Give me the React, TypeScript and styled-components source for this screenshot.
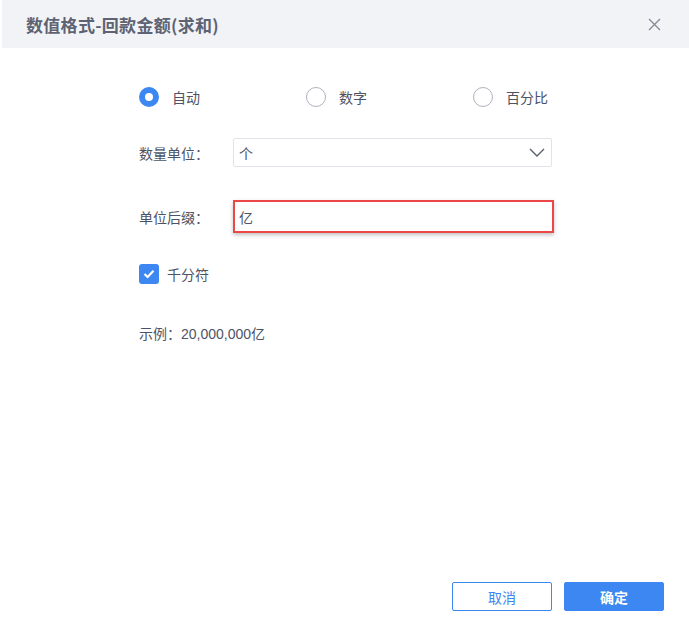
import React from "react";
import styled, { createGlobalStyle } from "styled-components";

const Global = createGlobalStyle`
  html, body { margin: 0; padding: 0; background: #ffffff; }
  body { font-family: "Liberation Sans", "Noto Sans CJK SC", sans-serif; }
  * { box-sizing: border-box; }
`;

const Dialog = styled.div`
  width: 687px;
  height: 624px;
  margin-left: 2px;
  display: flex;
  flex-direction: column;
  background: #ffffff;
`;

const Header = styled.div`
  height: 48px;
  background: #f2f3f7;
  display: flex;
  align-items: center;
  justify-content: space-between;
  padding: 0 24px 0 24px;
`;

const Title = styled.div`
  font-family: "Noto Sans CJK SC", sans-serif;
  font-size: 17px;
  font-weight: 700;
  color: #5d6373;
  letter-spacing: 0.3px;
`;

const CloseBtn = styled.div`
  width: 14px;
  height: 14px;
  display: flex;
  align-items: center;
  justify-content: center;
  margin-right: 4px;
`;

const Body = styled.div`
  flex: 1;
  padding: 38px 0 0 137px;
  display: flex;
  flex-direction: column;
`;

const RadioRow = styled.div`
  display: grid;
  grid-template-columns: 167px 167px auto;
  height: 21px;
  align-items: center;
`;

const RadioItem = styled.label`
  display: flex;
  align-items: center;
  gap: 13px;
  font-size: 14px;
  color: #4d5364;
`;

const RadioCircle = styled.span<{ $checked?: boolean }>`
  width: 20px;
  height: 20px;
  border-radius: 50%;
  border: ${(p) => (p.$checked ? "6.5px solid #3c87f1" : "1px solid #aeb2bd")};
  background: #ffffff;
  display: inline-block;
`;

const FieldRow = styled.div<{ $top: number; $h: number }>`
  display: grid;
  grid-template-columns: 94px auto;
  align-items: center;
  margin-top: ${(p) => p.$top}px;
  height: ${(p) => p.$h}px;
`;

const FieldLabel = styled.span`
  font-size: 14px;
  color: #4d5364;
`;

const Select = styled.div`
  width: 319px;
  height: 29px;
  border: 1px solid #e1e3e8;
  border-radius: 2px;
  display: flex;
  align-items: center;
  justify-content: space-between;
  padding: 0 6px 0 5px;
  font-size: 14px;
  color: #4d5364;
`;

const Input = styled.div`
  width: 321px;
  height: 33px;
  border: 2px solid #eb4747;
  box-shadow: 0 2px 4px rgba(0, 0, 0, 0.25);
  display: flex;
  align-items: center;
  padding: 0 4px;
  font-size: 14px;
  color: #4d5364;
`;

const CheckRow = styled.div`
  display: flex;
  align-items: center;
  gap: 8px;
  margin-top: 30px;
  height: 21px;
  font-size: 14px;
  color: #4d5364;
`;

const CheckBox = styled.span`
  width: 20px;
  height: 20px;
  border-radius: 3px;
  background: #3c87f1;
  display: flex;
  align-items: center;
  justify-content: center;
`;

const Example = styled.div`
  margin-top: 39px;
  font-size: 14px;
  color: #4d5364;
`;

const Footer = styled.div`
  display: flex;
  justify-content: flex-end;
  gap: 12px;
  padding: 0 25px 13px 0;
`;

const Button = styled.button<{ $primary?: boolean }>`
  width: 100px;
  height: 29px;
  border-radius: 2px;
  font-family: inherit;
  font-size: 14px;
  font-weight: ${(p) => (p.$primary ? 700 : 400)};
  border: 1px solid #3c87f1;
  background: ${(p) => (p.$primary ? "#3c87f1" : "#ffffff")};
  color: ${(p) => (p.$primary ? "#ffffff" : "#3c87f1")};
  padding: 0;
`;

export default function App() {
  return (
    <>
      <Global />
      <Dialog>
        <Header>
          <Title>数值格式-回款金额(求和)</Title>
          <CloseBtn>
            <svg width="13" height="13" viewBox="0 0 13 13">
              <path d="M1 1 L12 12 M12 1 L1 12" stroke="#838898" strokeWidth="1.3" fill="none" />
            </svg>
          </CloseBtn>
        </Header>
        <Body>
          <RadioRow>
            <RadioItem>
              <RadioCircle $checked />
              自动
            </RadioItem>
            <RadioItem>
              <RadioCircle />
              数字
            </RadioItem>
            <RadioItem>
              <RadioCircle />
              百分比
            </RadioItem>
          </RadioRow>
          <FieldRow $top={31} $h={29}>
            <FieldLabel>数量单位：</FieldLabel>
            <Select>
              <span>个</span>
              <svg width="16" height="9" viewBox="0 0 16 9">
                <path d="M1 1 L8 8 L15 1" stroke="#5a6070" strokeWidth="1.4" fill="none" />
              </svg>
            </Select>
          </FieldRow>
          <FieldRow $top={33} $h={33}>
            <FieldLabel>单位后缀：</FieldLabel>
            <Input>亿</Input>
          </FieldRow>
          <CheckRow>
            <CheckBox>
              <svg width="12" height="10" viewBox="0 0 12 10">
                <path d="M1.5 5 L4.6 8 L10.5 1.8" stroke="#ffffff" strokeWidth="2.2" fill="none" />
              </svg>
            </CheckBox>
            千分符
          </CheckRow>
          <Example>示例：20,000,000亿</Example>
        </Body>
        <Footer>
          <Button>取消</Button>
          <Button $primary>确定</Button>
        </Footer>
      </Dialog>
    </>
  );
}
